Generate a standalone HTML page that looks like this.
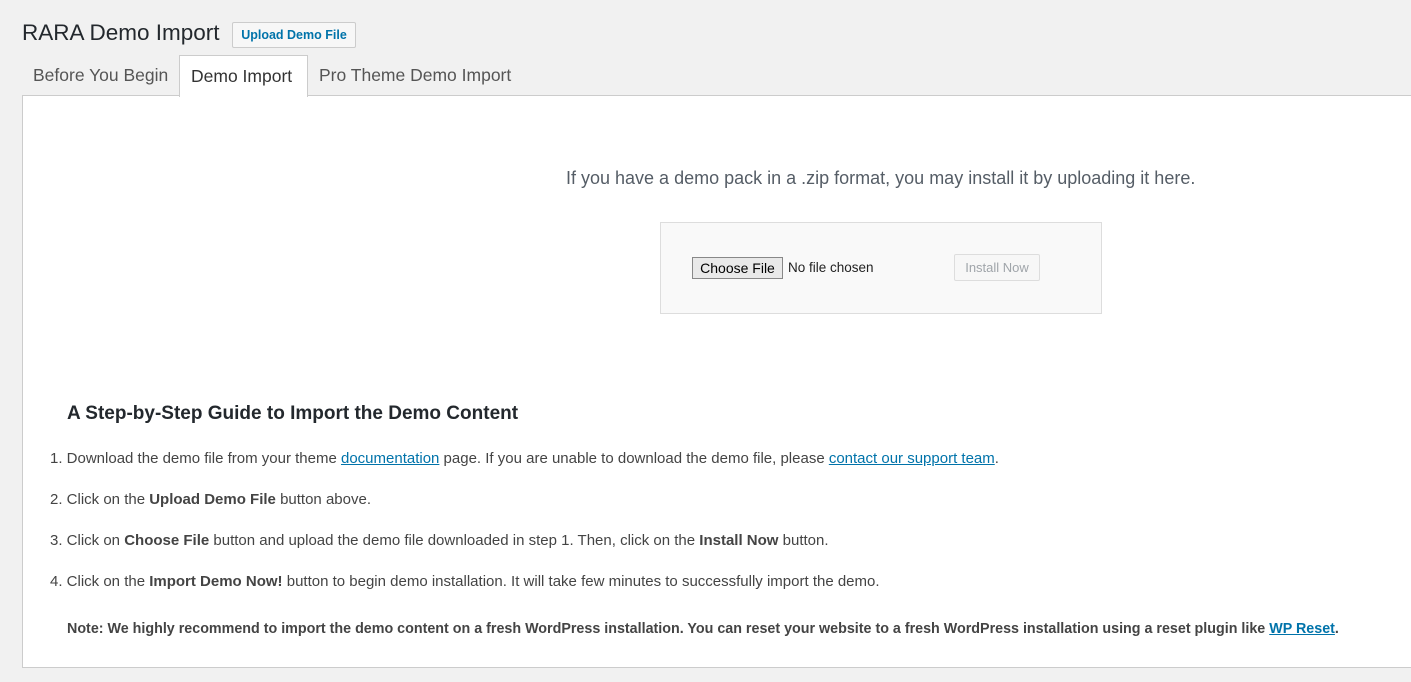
<!DOCTYPE html>
<html><head><style>
body{margin:0;background:#f1f1f1;font-family:"Liberation Sans",sans-serif;color:#444;width:1411px;height:682px;overflow:hidden;position:relative}
.a{position:absolute;white-space:nowrap}
h1{position:absolute;left:22px;top:20px;margin:0;font-size:22.5px;font-weight:400;color:#23282d}
.up{position:absolute;left:232px;top:22px;width:122px;height:24px;border:1px solid #ccc;background:#f7f7f7;color:#0073aa;font-size:12.5px;font-weight:bold;text-align:center;line-height:25px;border-radius:2px}
.tab{position:absolute;top:55px;height:40px;line-height:41px;font-size:17.5px;color:#555;padding:0 11px}
.act{background:#fff;border:1px solid #ccc;border-bottom:none;color:#333;height:40px}
.box{position:absolute;left:22px;top:95px;width:1400px;height:571px;background:#fff;border:1px solid #ccc}
.up2{position:absolute;left:660px;top:222px;width:440px;height:90px;background:#f9f9f9;border:1px solid #ddd}
a{color:#0073aa}
li{position:absolute;left:50px;font-size:15px;color:#444;white-space:nowrap}
b{color:#444}
</style></head><body>
<h1>RARA Demo Import</h1>
<div class="up">Upload Demo File</div>
<div class="tab" style="left:22px">Before You Begin</div>
<div class="box"></div>
<div class="tab act" style="left:179px;width:105px;z-index:2;top:55px;height:41px">Demo Import</div>
<div class="tab" style="left:308px">Pro Theme Demo Import</div>
<div class="a" style="left:566px;top:168px;font-size:18px;color:#555d66">If you have a demo pack in a .zip format, you may install it by uploading it here.</div>
<div class="up2"></div>
<div class="a" style="left:692px;top:257px;width:89px;height:20px;border:1px solid #888;background:#e9e9e9;font-size:14px;color:#000;text-align:center;line-height:20px">Choose File</div>
<div class="a" style="left:788px;top:260px;font-size:13.5px;color:#222">No file chosen</div>
<div class="a" style="left:954px;top:254px;width:84px;height:25px;border:1px solid #ddd;background:#f7f7f7;font-size:13px;color:#a0a5aa;text-align:center;line-height:25px;border-radius:2px">Install Now</div>
<div class="a" style="left:67px;top:403px;font-size:19px;font-weight:bold;color:#23282d">A Step-by-Step Guide to Import the Demo Content</div>
<ol style="margin:0;padding:0;list-style:none">
<li style="top:450px">1. Download the demo file from your theme <a href="#">documentation</a> page. If you are unable to download the demo file, please <a href="#">contact our support team</a>.</li>
<li style="top:491px">2. Click on the <b>Upload Demo File</b> button above.</li>
<li style="top:532px">3. Click on <b>Choose File</b> button and upload the demo file downloaded in step 1. Then, click on the <b>Install Now</b> button.</li>
<li style="top:573px">4. Click on the <b>Import Demo Now!</b> button to begin demo installation. It will take few minutes to successfully import the demo.</li>
<li style="top:621px;left:67px;font-size:14.3px"><b>Note: We highly recommend to import the demo content on a fresh WordPress installation. You can reset your website to a fresh WordPress installation using a reset plugin like <a href="#">WP Reset</a>.</b></li>
</ol>
</body></html>
